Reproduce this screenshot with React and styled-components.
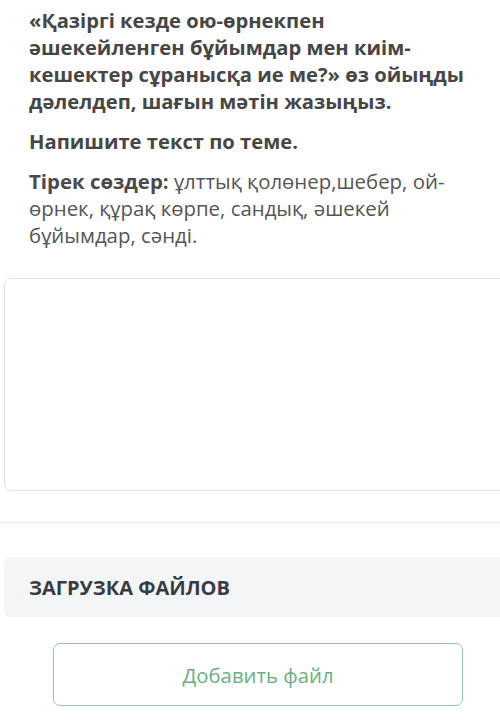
import React from "react";
import styled, { createGlobalStyle } from "styled-components";

const Global = createGlobalStyle`
  html, body { margin: 0; padding: 0; background: #ffffff; }
  body { font-family: "Open Sans", "Noto Sans", sans-serif; overflow: hidden; }
  * { box-sizing: border-box; }
`;

const Page = styled.div`
  width: 500px;
  height: 723px;
  overflow: hidden;
  display: flex;
  flex-direction: column;
  padding-top: 7px;
`;

const Question = styled.div`
  padding: 0 29px;
  display: flex;
  flex-direction: column;
  gap: 13px;
`;

const Title = styled.p`
  margin: 0;
  font-size: 20.2px;
  line-height: 27px;
  font-weight: 700;
  color: #464646;
`;

const Para = styled.p`
  margin: 0;
  font-size: 20.4px;
  line-height: 27px;
  font-weight: 400;
  color: #555555;
`;

const Lead = styled.strong`
  font-weight: 700;
  color: #4a4a4a;
`;

const Answer = styled.div`
  margin: 29px 0 0 4px;
  width: 520px;
  height: 213px;
  border: 1px solid #e3e3e3;
  border-radius: 7px;
  background: #ffffff;
`;

const Divider = styled.hr`
  margin: 31px 0 0 0;
  border: 0;
  border-top: 1px solid #e9e9e9;
  width: 100%;
`;

const UploadHeader = styled.div`
  margin: 34px 0 0 4px;
  width: 520px;
  height: 60px;
  background: #f4f5f7;
  border-radius: 6px;
  display: flex;
  align-items: center;
  padding-left: 25px;
  font-size: 20px;
  font-weight: 700;
  color: #383b42;
`;

const AddButton = styled.button`
  margin: 26px 0 0 53px;
  width: 410px;
  height: 63px;
  border: 1.5px solid #93c6aa;
  border-radius: 7px;
  background: #ffffff;
  color: #6aaf7f;
  font-family: "Open Sans", "Noto Sans", sans-serif;
  font-size: 20.3px;
  font-weight: 400;
  display: flex;
  align-items: center;
  justify-content: center;
  padding: 0;
`;

export default function App() {
  return (
    <Page>
      <Global />
      <Question>
        <Title>
          «Қазіргі кезде ою-өрнекпен әшекейленген бұйымдар мен киім-кешектер сұранысқа ие ме?» өз ойыңды дәлелдеп, шағын мәтін жазыңыз.
        </Title>
        <Title>Напишите текст по теме.</Title>
        <Para>
          <Lead>Тірек сөздер:</Lead> ұлттық қолөнер,шебер, ой-өрнек, құрақ көрпе, сандық, әшекей бұйымдар, сәнді.
        </Para>
      </Question>
      <Answer />
      <Divider />
      <UploadHeader>ЗАГРУЗКА ФАЙЛОВ</UploadHeader>
      <AddButton>Добавить файл</AddButton>
    </Page>
  );
}
